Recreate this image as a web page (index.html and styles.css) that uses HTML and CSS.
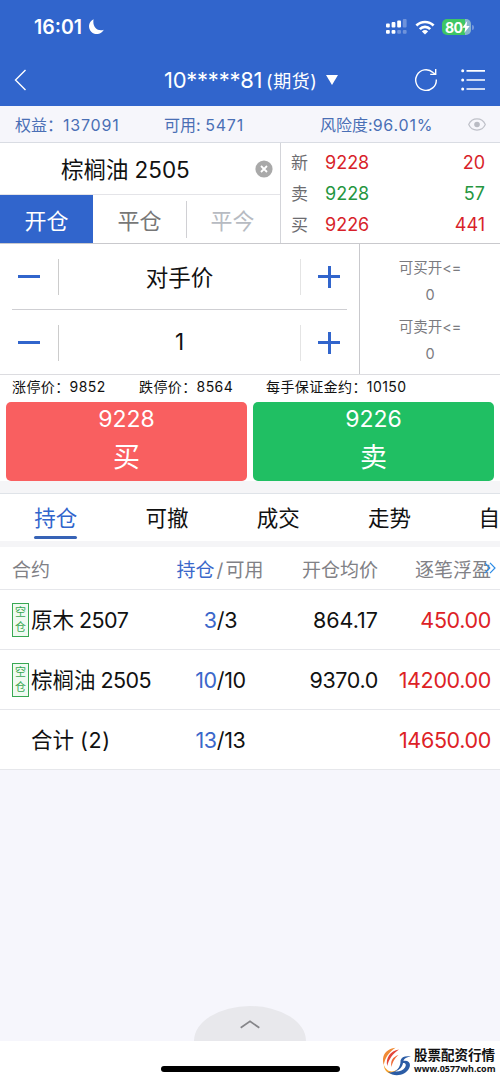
FILE: index.html
```html
<!DOCTYPE html>
<html lang="zh-CN">
<head>
<meta charset="utf-8">
<title>期货交易</title>
<link rel="stylesheet" href="styles.css">
</head>
<body>
<div class="app">
  <header class="header">
    <div class="status">
      <span class="time">16:01</span>
      <svg class="moon" width="16" height="16" viewBox="0 0 16 16"><path d="M5.600 .2A7.800 7.800 0 1 0 15.800 10.800C10 13 4 8.500 5.600 .2Z" fill="#fff"/></svg>
      <svg class="signal" width="21" height="16" viewBox="0 0 21 16"><g fill="#fff"><rect y="4.5" width="3.8" height="4" rx="1"/><rect x="5.6" y="3" width="3.8" height="5.5" rx="1"/><rect x="11.2" y="1.5" width="3.8" height="7" rx="1"/><rect y="11" width="3.8" height="3.8" rx="1"/><rect x="5.6" y="11" width="3.8" height="3.8" rx="1"/></g><g fill="#fff" opacity=".3"><rect x="16.8" width="3.8" height="8.5" rx="1"/><rect x="11.2" y="11" width="3.8" height="3.8" rx="1"/><rect x="16.8" y="11" width="3.8" height="3.8" rx="1"/></g></svg>
      <svg class="wifi" width="20" height="15" viewBox="0 0 20 15"><g fill="none" stroke="#fff" stroke-width="2.7"><path d="M1.4 5.5a12.3 12.3 0 0 1 17.2 0"/><path d="M4.8 9.1a7.4 7.4 0 0 1 10.4 0"/></g><path d="M10 14.6 6.9 11.4a4.5 4.5 0 0 1 6.2 0Z" fill="#fff"/></svg>
      <div class="battery"><span>80</span><svg width="8" height="12" viewBox="0 0 8 12"><path d="M5.2 0 .3 6.8h3L2.3 12 7.7 5H4.5Z" fill="#fff"/></svg></div>
      <i class="battery-tip"></i>
    </div>
    <nav class="nav">
      <svg class="back" width="13" height="22" viewBox="0 0 13 22"><path d="M11.500 1 1.500 11 11.500 21" fill="none" stroke="#fff" stroke-width="1.4"/></svg>
      <h1 class="account"><span class="account-no">10*****81</span><span class="account-type">(期货)</span><i class="caret"></i></h1>
      <svg class="refresh" width="24" height="24" viewBox="0 0 24 24"><path d="M22.300 11.500A10.300 10.300 0 1 1 19 4.500L21.500 6.300M21.700 1v5.400h-5.500" fill="none" stroke="#fff" stroke-width="1.4"/></svg>
      <svg class="menu" width="24" height="22" viewBox="0 0 24 22"><path d="M5.500 1.800H24M5.500 11H24M5.500 20H24" stroke="#fff" stroke-width="1.7"/><g fill="#fff"><circle cx="1.7" cy="1.8" r="1.5"/><circle cx="1.7" cy="11" r="1.5"/><circle cx="1.7" cy="20" r="1.5"/></g></svg>
    </nav>
  </header>

  <section class="funds">
    <span class="equity">权益：<b>137091</b></span>
    <span class="available">可用: <b>5471</b></span>
    <span class="risk">风险度:<b>96.01%</b></span>
    <svg class="eye" width="18" height="13" viewBox="0 0 18 13"><path d="M.7 6.500C4-.9 14-.9 17.300 6.500 14 13.900 4 13.900.7 6.500Z" fill="none" stroke="#bfc1c9" stroke-width="1.2"/><circle cx="9" cy="6.5" r="2.8" fill="#b9bbc3"/></svg>
  </section>

  <section class="contract">
    <div class="contract-left">
      <div class="contract-name"><span>棕榈油<b>2505</b></span>
        <svg width="18" height="18" viewBox="0 0 18 18"><circle cx="9" cy="9" r="8.6" fill="#a9a9a9"/><path d="m6 6 6 6m0-6-6 6" stroke="#fff" stroke-width="1.8"/></svg>
      </div>
      <div class="direction"><span class="dir active">开仓</span><span class="dir">平仓</span><span class="dir disabled">平今</span></div>
    </div>
    <div class="quotes">
      <div class="quote up"><em>新</em><span>9228</span><span class="volume">20</span></div>
      <div class="quote down"><em>卖</em><span>9228</span><span class="volume">57</span></div>
      <div class="quote up"><em>买</em><span>9226</span><span class="volume">441</span></div>
    </div>
  </section>

  <section class="order">
    <div class="inputs">
      <div class="stepper"><i class="minus"></i><span class="value">对手价</span><i class="plus"></i></div>
      <div class="stepper"><i class="minus"></i><span class="value">1</span><i class="plus"></i></div>
    </div>
    <div class="limits"><span>可买开&lt;=</span><span>0</span><span>可卖开&lt;=</span><span>0</span></div>
  </section>

  <section class="bounds"><span class="b-up">涨停价：9852</span><span class="b-down">跌停价：8564</span><span class="b-margin">每手保证金约：10150</span></section>

  <section class="actions">
    <button class="action buy"><span>9228</span><strong>买</strong></button>
    <button class="action sell"><span>9226</span><strong>卖</strong></button>
  </section>

  <nav class="tabs"><span class="tab current">持仓</span><span class="tab">可撤</span><span class="tab">成交</span><span class="tab">走势</span><span class="tab last">自</span></nav>

  <section class="positions">
    <div class="row head"><span class="name">合约</span><span class="hold"><b>持仓</b><u>/</u>可用</span><span class="price">开仓均价</span><span class="profit">逐笔浮盈</span>
      <svg class="more" width="12" height="12" viewBox="0 0 12 12"><path d="m.8.8 5 5.200-5 5.200M6 .8 11 6l-5 5.200" fill="none" stroke="#2b8be6" stroke-width="1.2"/></svg>
    </div>
    <div class="row"><i class="badge">空<br>仓</i><span class="name">原木<b>2507</b></span><span class="hold"><b>3</b>/3</span><span class="price wide">864.17</span><span class="profit">450.00</span></div>
    <div class="row"><i class="badge">空<br>仓</i><span class="name">棕榈油<b>2505</b></span><span class="hold"><b>10</b>/10</span><span class="price">9370.0</span><span class="profit">14200.00</span></div>
    <div class="row total"><span class="name">合计<b>(2)</b></span><span class="hold"><b>13</b>/13</span><span class="price"></span><span class="profit">14650.00</span></div>
  </section>

  <div class="blank">
    <div class="drawer"><svg width="20" height="9" viewBox="0 0 20 9"><path d="M.7 7.700 10 1.400l9.300 6.300" fill="none" stroke="#858589" stroke-width="1.7"/></svg></div>
  </div>

  <footer class="footer">
    <i class="home-bar"></i>
    <div class="brand">
      <svg width="29" height="29" viewBox="0 0 29 29">
        <path d="M12.500 .8C2 2-2 10 .8 18 2 11 5.500 5.500 12.500 .8Z" fill="#f08a35"/>
        <path d="M16 2.500C7 4 2.500 11 4.200 19 6 12 9.500 7 16 2.500Z" fill="#e2463a"/>
        <path d="M15.500 8C9.500 10 7.200 14 8.500 20 9.800 14.500 11.500 11.500 15.500 8Z" fill="#ee6a35"/>
        <path d="M.8 17.500C2.500 24 9 26.500 14 22.500 9.500 30 1 26 .8 17.500Z" fill="#f5a12b"/>
        <path d="M5 25C12 27 18 21 17.500 13.500 18.500 10 22 8.500 28 9.500 24 10 21 11.500 20.500 14 26 13 28.500 17 26 21.500 22.500 28 12 31 5 25Z" fill="#2b5ca5"/>
        <path d="M12 24.500C17 23 19.500 19.500 20 16 23 16 23.500 18 22 20.500 20 23.500 16 25 12 24.500Z" fill="#fff"/>
      </svg>
      <div class="brand-text"><strong>股票配资行情</strong><span>www.0577wh.com</span></div>
    </div>
  </footer>
</div>
</body>
</html>
```

FILE: styles.css
```css
* { box-sizing: border-box; }
body { margin: 0; background: #fff; font-family: Inter, "Noto Sans CJK SC", sans-serif; color: #111; }
i, em { font-style: normal; }
b { font-weight: 400; }
u { text-decoration: none; }
svg { display: block; flex: none; }
.app { width: 500px; height: 1082px; overflow: hidden; display: flex; flex-direction: column; white-space: nowrap; }
.app > * { flex: none; }

.header { height: 106px; background: #3165cc; color: #fff; }
.status { height: 54px; padding: 0 25px 0 34px; display: flex; align-items: center; }
.time { font-size: 19.5px; font-weight: 600; letter-spacing: 0; width: 53px; }
.moon { margin-left: 1px; }
.signal { margin-left: 282px; }
.wifi { margin-left: 8px; }
.battery { margin-left: 7px; width: 29px; height: 16px; border-radius: 5px; background: linear-gradient(90deg, #3ec664 80%, #88b5cf 80%); display: flex; align-items: center; padding-left: 3px; font-size: 14px; font-weight: 700; letter-spacing: -.6px; }
.battery-tip { width: 2px; height: 5px; margin-left: 1px; border-radius: 0 2px 2px 0; background: #7598dd; }
.nav { height: 52px; padding: 0 14px; display: flex; align-items: center; }
.account { margin: 0 0 0 137px; width: 250px; display: flex; align-items: center; font-weight: 400; font-size: 22px; }
.account-no { width: 102px; letter-spacing: -.25px; }
.account-type { font-size: 18px; letter-spacing: .6px; }
.caret { margin-left: 8px; border: 6.5px solid transparent; border-top: 10px solid #fff; border-bottom: 0; }
.menu { margin-left: 23px; }

.funds { height: 37px; background: #f6f6fb; border-bottom: 1px solid #d9dce3; color: #4a6fb5; font-size: 16px; display: flex; align-items: center; padding-left: 15px; }
.funds b { letter-spacing: .8px; }
.equity { width: 149px; }
.available { width: 156px; }
.risk { width: 148px; }

.contract { height: 101px; display: flex; border-bottom: 1px solid #c9c9cd; }
.contract-left { width: 281px; border-right: 1px solid #d3d4d9; }
.contract-name { height: 52px; border-bottom: 1px solid #e4e4e8; padding: 0 7px 2px 61px; display: flex; align-items: center; justify-content: space-between; font-size: 22.5px; }
.contract-name svg { margin-top: 2px; }
.contract-name b { margin-left: 6px; }
.name b { margin-left: 5px; letter-spacing: -.55px; }
.direction { height: 48px; display: flex; }
.dir { width: 93px; display: flex; align-items: center; justify-content: center; font-size: 22px; color: #777; position: relative; padding-bottom: 1px; }
.dir.active { background: #3165cc; color: #fff; }
.dir.disabled { color: #b7bbc2; }
.dir.disabled::before { content: ""; position: absolute; left: 0; top: 6px; width: 1px; height: 37px; background: #d0d0d4; }
.quotes { flex: 1; padding: 4px 15px 3px 10px; display: flex; flex-direction: column; }
.quote { flex: 1; display: flex; align-items: center; font-size: 18px; }
.quote em { width: 34px; font-size: 17px; color: #6c6c70; padding-bottom: 2px; }
.volume { margin-left: auto; }
.up { color: #d81f2a; }
.down { color: #25963f; }

.order { height: 131px; display: flex; border-bottom: 1px solid #dcdce0; }
.inputs { width: 360px; border-right: 1px solid #c9c9cd; padding: 0 12px; }
.stepper { height: 65px; display: flex; align-items: center; padding-left: 6px; padding-right: 5px; }
.stepper:first-child { border-bottom: 1px solid #cfcfd3; height: 66px; }
.value { width: 243px; height: 36px; margin: 0 17px 0 18px; border-left: 1px solid #ccc; border-right: 1px solid #e4e4e4; display: flex; align-items: center; justify-content: center; font-size: 22.5px; padding-bottom: 2px; }
.minus, .plus { width: 22px; height: 22px; flex: none; background: linear-gradient(#3165cc, #3165cc) center / 22px 3px no-repeat; }
.plus { background: linear-gradient(#3165cc, #3165cc) center / 22px 3px no-repeat, linear-gradient(#3165cc, #3165cc) center / 3px 22px no-repeat; }
.limits { flex: 1; display: grid; grid-template-rows: 26.5px 32.5px 26.5px 32.5px; padding-top: 11px; align-items: start; justify-items: center; font-size: 14.5px; color: #7b7b7f; line-height: 26px; }

.bounds { height: 27px; padding: 0 12px 5px; display: flex; align-items: center; font-size: 14px; letter-spacing: .4px; }
.b-up { width: 127px; }
.b-down { width: 127px; }

.actions { height: 79px; padding: 0 6px; display: flex; gap: 6px; }
.action { flex: 1; border: 0; border-radius: 5px; padding: 0; color: #fff; font: inherit; font-size: 23px; display: flex; flex-direction: column; align-items: center; }
.action span { line-height: 34px; }
.action strong { font-size: 27px; font-weight: 400; line-height: 43px; }
.buy { background: #f95f60; }
.sell { background: #20bf63; }

.tabs { height: 66px; border-top: 12px solid #f5f5f7; border-bottom: 6px solid #f5f5f7; display: flex; box-shadow: inset 0 1px #dfe3e8; overflow: hidden; }
.tab { flex: 0 0 111.3px; display: flex; align-items: center; justify-content: center; font-size: 21.5px; position: relative; padding-bottom: 2px; }
.tab.last { flex: 1; justify-content: flex-end; padding-right: 0; }
.current { color: #3165cc; }
.current::after { content: ""; position: absolute; left: 34px; top: 43px; width: 43px; height: 3px; border-radius: 2px; background: #3763b6; }

.positions { background: #fff; }
.row { height: 60px; border-bottom: 1px solid #e6e7eb; position: relative; display: flex; align-items: center; padding-left: 12px; font-size: 21.5px; letter-spacing: -.35px; }
.row.head { height: 43px; font-size: 19px; color: #818186; letter-spacing: 0; }
.badge { width: 17px; height: 34px; border: 1px solid #38a852; color: #38a852; background: #f0faf2; font-size: 11px; line-height: 15px; text-align: center; letter-spacing: 0; padding-top: 1px; margin: 0 3px 0 0; }
.row .name { width: 143px; letter-spacing: 0; margin-left: -1px; margin-right: 1px; padding-bottom: 2px; }
.row.total .name { margin-left: 19px; }
.row.total .name b { margin-left: 6px; letter-spacing: .7px; }
.row.head .name { width: 163px; margin-left: 0; margin-right: 0; padding-bottom: 0; }
.hold { width: 90px; text-align: center; }
.row:not(.head) .hold { padding-left: 1px; }
.hold b { color: #3b68ca; }
.head .hold u { margin: 0 2px; }
.price { width: 113px; text-align: right; }
.price.wide { letter-spacing: 0; }
.profit { width: 113px; text-align: right; color: #dd2226; }
.head .profit { color: inherit; }
.more { position: absolute; left: 484px; top: 15px; }

.blank { height: 271px; background: #f6f6fc; display: flex; justify-content: center; align-items: flex-end; overflow: hidden; }
.drawer { width: 112px; height: 35px; border-radius: 56px 56px 0 0 / 35px 35px 0 0; background: #e8e8ec; display: flex; justify-content: center; padding-top: 14px; }
.app > .footer { flex: 1; display: flex; }
.home-bar { flex: none; width: 179px; height: 6px; border-radius: 3px; background: #000; margin: 25px 0 0 161px; }
.brand { flex: none; display: flex; margin: 6px 0 0 43px; }
.brand-text { margin-left: 2px; display: flex; flex-direction: column; }
.brand-text strong { font-size: 13.5px; line-height: 17px; font-weight: 700; }
.brand-text span { font: 700 9px/10px "Open Sans", sans-serif; }
```
